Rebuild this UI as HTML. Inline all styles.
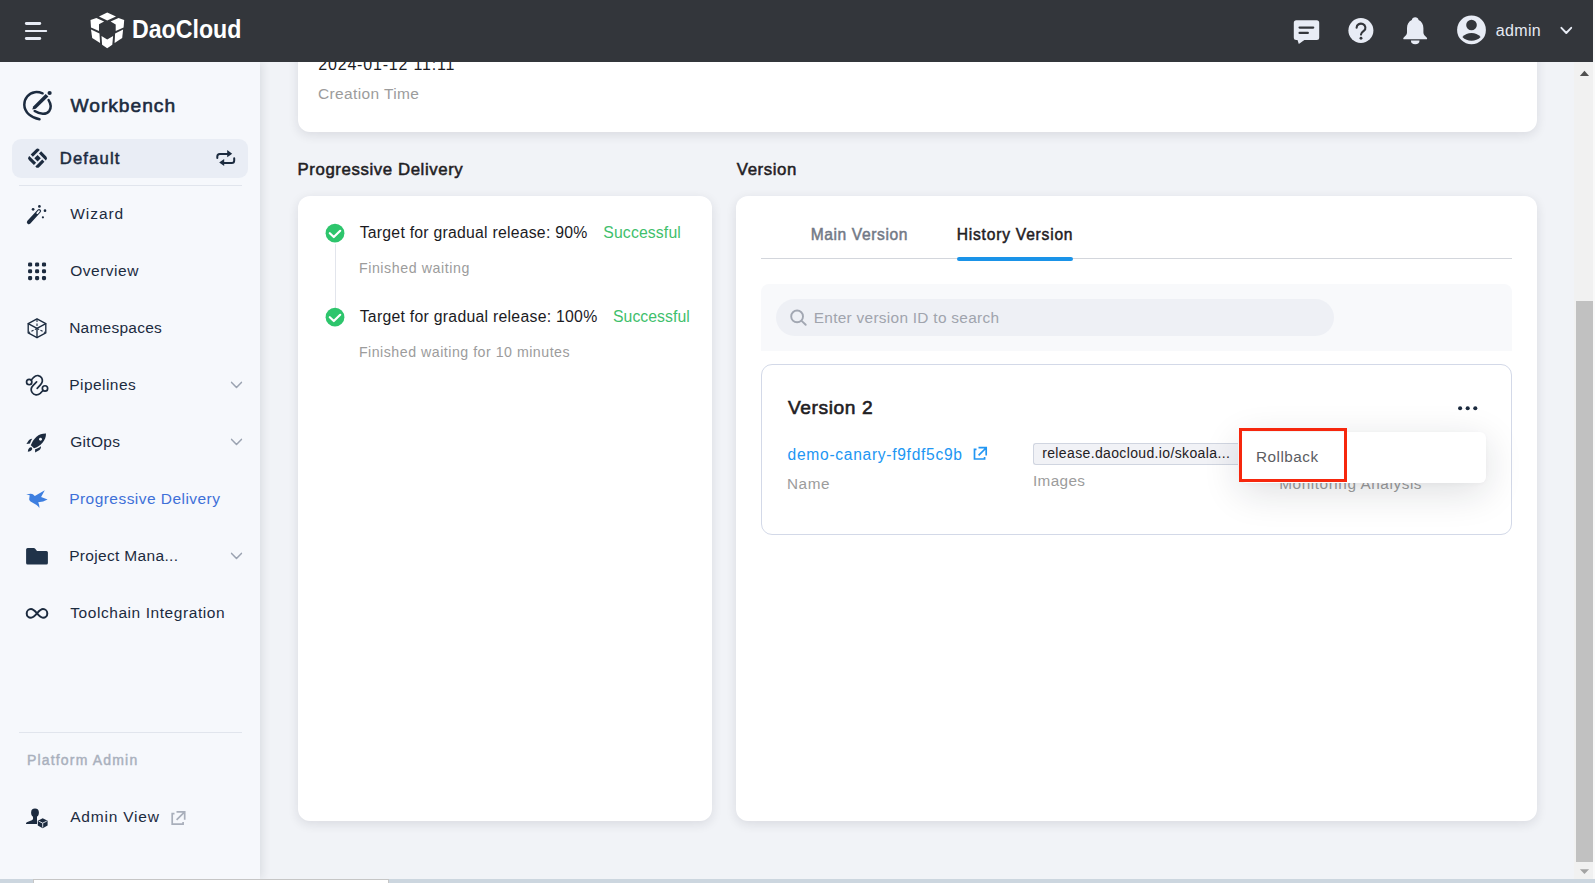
<!DOCTYPE html>
<html lang="en">
<head>
<meta charset="utf-8">
<title>Workbench - Progressive Delivery</title>
<style>
*{box-sizing:border-box;margin:0;padding:0}
html,body{width:1595px;height:883px;overflow:hidden;background:#f1f3f7;font-family:"Liberation Sans",sans-serif;color:#1b2130}
.t{position:absolute;white-space:nowrap;line-height:1}
.layer{position:absolute;left:0;top:0;width:1595px;height:883px;overflow:hidden}
svg.ov{position:absolute;left:0;top:0;width:1595px;height:883px;overflow:visible}
#main{z-index:1}
#sidebar{z-index:10;width:260px;top:62px;height:817px;background:#f6f8fc;overflow:visible;box-shadow:2px 0 9px rgba(30,32,45,.11)}
#sidebar .in{position:absolute;left:0;top:-62px;width:260px;height:883px}
#header{z-index:20;width:1593px;height:62px;background:#33363b}
#scroll{position:absolute;left:1574px;top:62px;width:19px;height:817px;background:#f1f1f1;z-index:15}
#thumb{position:absolute;left:2px;top:239px;width:17px;height:561px;background:#c1c1c1}
#rightstrip{position:absolute;left:1593px;top:0;width:2px;height:883px;background:#f9f9f9;z-index:30}
#bottom{position:absolute;left:0;top:879px;width:1595px;height:4px;background:#ccd6df;z-index:40}
#bottom i{position:absolute;left:33px;top:0;width:356px;height:4px;background:#fff;border:1px solid #c6c6c6;border-bottom:0}
.card{position:absolute;background:#fff;border-radius:12px;box-shadow:0 3px 11px rgba(25,30,50,.11)}
.box{position:absolute}
</style>
</head>
<body>
<!-- ================= MAIN ================= -->
<div id="main" class="layer">
  <div class="card" style="left:298px;top:20px;width:1239px;height:111.5px"></div>
  <div class="card" style="left:298px;top:196px;width:414px;height:625px"></div>
  <div class="card" style="left:736px;top:196px;width:801px;height:625px"></div>
  <!-- tabs -->
  <div class="box" style="left:761px;top:258px;width:751px;height:1px;background:#d3d6dc"></div>
  <div class="box" style="left:957px;top:256.5px;width:115.5px;height:4px;border-radius:2px;background:#1a93e8"></div>
  <!-- search area -->
  <div class="box" style="left:761px;top:284px;width:751px;height:67px;background:#f8f9fb;border-radius:8px 8px 0 0"></div>
  <div class="box" style="left:776px;top:299px;width:558px;height:37px;background:#eef0f5;border-radius:18.5px"></div>
  <!-- version card -->
  <div class="box" style="left:761px;top:364px;width:750.5px;height:171px;border:1px solid #d3d9e8;border-radius:11px;background:#fff"></div>
  <div class="box" style="left:1033px;top:443px;width:204.5px;height:22px;background:#f1f2f6;border:1px solid #d0d5e0;border-right:0;border-radius:3px 0 0 3px"></div>
  <!-- timeline line -->
  <div class="box" style="left:335px;top:244px;width:1px;height:64px;background:#e2e5ec"></div>
<div class="t" style="left:318.30px;top:57.0px;font-size:16px;color:#1b1b1f;letter-spacing:0.803px">2024-01-12 11:11</div>
<div class="t" style="left:318.00px;top:86.0px;font-size:15.5px;color:#9c9c9c;letter-spacing:0.363px">Creation Time</div>
<div class="t" style="left:297.56px;top:162.0px;font-size:16.8px;color:#1f2023;letter-spacing:0.594px;-webkit-text-stroke:0.52px #1f2023">Progressive Delivery</div>
<div class="t" style="left:736.86px;top:162.0px;font-size:16.8px;color:#1f2023;letter-spacing:0.573px;-webkit-text-stroke:0.52px #1f2023">Version</div>
<div class="t" style="left:359.70px;top:225.0px;font-size:15.8px;color:#1b1b1f;letter-spacing:0.238px">Target for gradual release: 90%</div>
<div class="t" style="left:603.30px;top:225.0px;font-size:15.8px;color:#3fc06c;letter-spacing:0.125px">Successful</div>
<div class="t" style="left:358.90px;top:261.0px;font-size:14.2px;color:#9c9c9c;letter-spacing:0.591px">Finished waiting</div>
<div class="t" style="left:359.70px;top:309.0px;font-size:15.8px;color:#1b1b1f;letter-spacing:0.269px">Target for gradual release: 100%</div>
<div class="t" style="left:613.00px;top:309.0px;font-size:15.8px;color:#3fc06c;letter-spacing:0.036px">Successful</div>
<div class="t" style="left:358.90px;top:345.0px;font-size:14.2px;color:#9c9c9c;letter-spacing:0.504px">Finished waiting for 10 minutes</div>
<div class="t" style="left:810.64px;top:227.0px;font-size:15.6px;color:#727986;letter-spacing:0.613px;-webkit-text-stroke:0.48px #727986">Main Version</div>
<div class="t" style="left:956.74px;top:227.0px;font-size:15.6px;color:#1f2023;letter-spacing:0.781px;-webkit-text-stroke:0.48px #1f2023">History Version</div>
<div class="t" style="left:813.80px;top:310.0px;font-size:15.4px;color:#a0a4ad;letter-spacing:0.289px">Enter version ID to search</div>
<div class="t" style="left:787.90px;top:398.0px;font-size:19.2px;color:#1f2023;letter-spacing:0.609px;-webkit-text-stroke:0.60px #1f2023">Version 2</div>
<div class="t" style="left:787.60px;top:447.0px;font-size:15.6px;color:#2196f3;letter-spacing:0.701px">demo-canary-f9fdf5c9b</div>
<div class="t" style="left:787.00px;top:476.0px;font-size:15.3px;color:#9c9c9c;letter-spacing:0.568px">Name</div>
<div class="t" style="left:1042.20px;top:446.0px;font-size:14px;color:#1f2023;letter-spacing:0.362px">release.daocloud.io/skoala...</div>
<div class="t" style="left:1033.00px;top:473.0px;font-size:15.3px;color:#9c9c9c;letter-spacing:0.357px">Images</div>
<div class="t" style="left:1279.30px;top:476.0px;font-size:15.3px;color:#9c9c9c;letter-spacing:0.579px">Monitoring Analysis</div>
  <svg class="ov" viewBox="0 0 1595 883">
<!-- check icons -->
<circle cx="335" cy="233.200" r="9.400" fill="#2dc56c"/>
<path d="M329.800 233.200 L333.800 237 L340.200 230.800" fill="none" stroke="#fff" stroke-width="2.200" stroke-linecap="round" stroke-linejoin="round"/>
<circle cx="335" cy="317.200" r="9.400" fill="#2dc56c"/>
<path d="M329.800 317.200 L333.800 321 L340.200 314.800" fill="none" stroke="#fff" stroke-width="2.200" stroke-linecap="round" stroke-linejoin="round"/>
<!-- search -->
<g fill="none" stroke="#a2a7b2" stroke-width="1.900" stroke-linecap="round">
<circle cx="797.100" cy="316.400" r="5.900"/>
<line x1="801.600" y1="320.900" x2="805.700" y2="324.800"/>
</g>
<!-- link external -->
<g fill="none" stroke="#2196f3" stroke-width="1.700">
<path d="M976.500 449.300 H974.500 V459 H984.600 V457"/>
<path d="M978.500 447.700 H986.200 V455.400 M978.600 455.300 L986 448"/>
</g>
<!-- more dots -->
<g fill="#1c2b3f"><circle cx="1460.100" cy="408.200" r="2.050"/><circle cx="1467.700" cy="408.200" r="2.050"/><circle cx="1475.300" cy="408.200" r="2.050"/></g>

  </svg>
  <!-- dropdown -->
  <div class="box" style="left:1240px;top:432px;width:246px;height:50.5px;background:#fff;border-radius:6px;box-shadow:0 9px 38px rgba(20,25,40,.14),0 1px 4px rgba(20,25,40,.03)"></div>
<div class="t" style="left:1256.10px;top:449.0px;font-size:15.3px;color:#5b5d62;letter-spacing:0.469px">Rollback</div>
  <div class="box" style="left:1239px;top:428px;width:108px;height:54px;border:3px solid #f6270d"></div>
</div>
<!-- ================= SIDEBAR ================= -->
<div id="sidebar" class="layer"><div class="in">
  <div class="box" style="left:12px;top:139px;width:236px;height:39px;background:#e9edf5;border-radius:9px"></div>
  <div class="box" style="left:19px;top:185px;width:223px;height:1px;background:#e1e5ed"></div>
  <div class="box" style="left:19px;top:732px;width:223px;height:1px;background:#e1e5ed"></div>
<div class="t" style="left:70.50px;top:96.0px;font-size:19.2px;color:#1c2b3f;letter-spacing:0.985px;-webkit-text-stroke:0.60px #1c2b3f">Workbench</div>
<div class="t" style="left:59.76px;top:151.0px;font-size:16.7px;color:#1c2b3f;letter-spacing:1.124px;-webkit-text-stroke:0.52px #1c2b3f">Default</div>
<div class="t" style="left:70.20px;top:206.0px;font-size:15.5px;color:#1c2b3f;letter-spacing:0.959px">Wizard</div>
<div class="t" style="left:70.20px;top:263.0px;font-size:15.5px;color:#1c2b3f;letter-spacing:0.514px">Overview</div>
<div class="t" style="left:69.20px;top:320.0px;font-size:15.5px;color:#1c2b3f;letter-spacing:0.233px">Namespaces</div>
<div class="t" style="left:69.20px;top:377.0px;font-size:15.5px;color:#1c2b3f;letter-spacing:0.456px">Pipelines</div>
<div class="t" style="left:70.20px;top:434.0px;font-size:15.5px;color:#1c2b3f;letter-spacing:0.303px">GitOps</div>
<div class="t" style="left:69.20px;top:491.0px;font-size:15.5px;color:#3e70d8;letter-spacing:0.454px">Progressive Delivery</div>
<div class="t" style="left:69.20px;top:548.0px;font-size:15.5px;color:#1c2b3f;letter-spacing:0.326px">Project Mana...</div>
<div class="t" style="left:70.20px;top:605.0px;font-size:15.5px;color:#1c2b3f;letter-spacing:0.569px">Toolchain Integration</div>
<div class="t" style="left:26.92px;top:753.0px;font-size:14px;color:#a9b0bd;letter-spacing:1.181px;-webkit-text-stroke:0.43px #a9b0bd">Platform Admin</div>
<div class="t" style="left:70.20px;top:809.0px;font-size:15.5px;color:#1c2b3f;letter-spacing:0.793px">Admin View</div>
  <svg class="ov" viewBox="0 0 1595 883">
<!-- workbench -->
<g fill="none" stroke="#1c2b3f" stroke-width="2.5" stroke-linecap="round">
<path d="M42.600 93.300 C40 92.300 37.400 91.900 34.800 92.200 C28.600 93 24.200 98.500 24.300 104.800 C24.400 112.500 31.300 117.900 39.500 119.200"/>
<path d="M48.600 100.100 C50.800 103.600 51.300 107.800 49.300 110.900 C46.300 115 39.900 114.400 34.700 111"/>
</g>
<polygon points="32.300,109.500 33.200,106.400 45.700,94.100 48.400,96.400 35.800,108.800" fill="#1c2b3f"/>
<circle cx="49.600" cy="93" r="2.100" fill="#1c2b3f"/>
<!-- default icon -->
<g transform="translate(37.550 158.200) rotate(-45)" fill="#1c2b3f">
<rect x="-2.300" y="-2.300" width="4.600" height="4.600"/>
<path d="M-2.300 -7.400 H4.900 A2.500 2.500 0 0 1 7.400 -4.900 V-4.300 H-2.300Z"/>
<path d="M7.400 -2.300 V4.900 A2.500 2.500 0 0 1 4.900 7.400 H4.300 V-2.300Z"/>
<path d="M2.300 7.400 H-4.900 A2.500 2.500 0 0 1 -7.400 4.900 V4.300 H2.300Z"/>
<path d="M-7.400 2.300 V-4.900 A2.500 2.500 0 0 1 -4.900 -7.400 H-4.300 V2.300Z"/>
</g>
<!-- swap -->
<g fill="none" stroke="#1c2b3f" stroke-width="2" stroke-linecap="round">
<path d="M217.300 158 V156.400 A2.500 2.500 0 0 1 219.800 153.900 H227.500"/>
<path d="M234.200 158.200 V160.400 A2.500 2.500 0 0 1 231.700 162.900 H224.200"/>
</g>
<polygon points="227.200,150 232.200,153.700 227.200,157.200" fill="#1c2b3f"/>
<polygon points="224.200,159.100 219.200,162.500 224.200,166" fill="#1c2b3f"/>
<!-- wizard -->
<line x1="28.900" y1="222.200" x2="39.100" y2="211" stroke="#1c2b3f" stroke-width="4" stroke-linecap="round"/>
<line x1="37.300" y1="213.100" x2="39" y2="211.200" stroke="#f6f8fc" stroke-width="1.800" stroke-linecap="round"/>
<g fill="#1c2b3f">
<circle cx="39.400" cy="206.400" r="1.350"/><circle cx="33.100" cy="209.300" r="1.350"/><circle cx="45" cy="210.700" r="1.350"/><circle cx="42.900" cy="217.300" r="1.100"/>
</g>
<!-- overview dots -->
<g fill="#1c2b3f">
<rect x="28.050" y="262.450" width="4.100" height="4.100" rx="1.400"/><rect x="35.050" y="262.450" width="4.100" height="4.100" rx="1.400"/><rect x="41.950" y="262.450" width="4.100" height="4.100" rx="1.400"/>
<rect x="28.050" y="269.250" width="4.100" height="4.100" rx="1.400"/><rect x="35.050" y="269.250" width="4.100" height="4.100" rx="1.400"/><rect x="41.950" y="269.250" width="4.100" height="4.100" rx="1.400"/>
<rect x="28.050" y="276.050" width="4.100" height="4.100" rx="1.400"/><rect x="35.050" y="276.050" width="4.100" height="4.100" rx="1.400"/><rect x="41.950" y="276.050" width="4.100" height="4.100" rx="1.400"/>
</g>
<!-- namespaces cube -->
<g fill="none" stroke="#1c2b3f" stroke-width="1.350" stroke-linejoin="round" stroke-linecap="round">
<polygon points="37,318.800 45.800,323.700 45.800,332.900 37,337.600 28.200,332.900 28.200,323.700"/>
<path d="M28.200 323.700 L37 328.400 L45.800 323.700 M37 328.400 V337.600"/>
</g>
<g fill="none" stroke="#1c2b3f" stroke-width="1.100" stroke-dasharray="2.400 1.500">
<path d="M37 319.600 V328.400 M37 328.400 L29 332.500 M37 328.400 L45 332.500"/>
</g>
<!-- pipelines -->
<g fill="none" stroke="#1c2b3f" stroke-width="1.700" stroke-linecap="round">
<circle cx="29.200" cy="382.100" r="2.650"/>
<circle cx="45" cy="388.400" r="2.650"/>
<path d="M31.300 380 L33.700 377.300 C36.300 374.600 40.300 375 41.800 378.200 C42.900 380.500 42.300 382.900 40.400 384.900 L37.200 388.400"/>
<path d="M36.600 381.900 L33.200 385.300 C31 387.500 30.700 390.300 32.200 392.600 C33.900 395.300 37.700 395.600 40.200 393.300 L43 390.500"/>
</g>
<!-- gitops rocket -->
<g fill="#1c2b3f">
<path d="M46 433.500 C42.500 433.400 39 434.600 36.500 436.700 C33.800 439 31.800 442.500 30.800 445.300 L34 448.200 C36.800 447.400 40.100 445.500 42.500 442.700 C44.900 439.900 46.100 436.800 46 433.500Z"/>
<path d="M32.200 438.800 C30.800 438.700 29.400 439.500 28.500 440.800 L26.400 444.100 L30 443.500 C30.500 441.800 31.300 440.200 32.200 438.800Z"/>
<path d="M41 446.300 C41.100 447.700 40.600 449.100 39.500 450 L35.100 452.600 L35.100 449.200 C37.200 448.700 39.300 447.700 41 446.300Z"/>
<path d="M32.100 448 C32.700 449.700 31.200 451.400 27.800 451.700 C28 448.400 29.800 446.800 31.300 447.200Z"/>
</g>
<circle cx="40.500" cy="439.200" r="1.450" fill="#f6f8fc"/>
<!-- progressive delivery bird -->
<path d="M26.200 494.500 L30.500 493.700 C31.500 493.600 32.300 493.900 32.900 494.300 L34.800 495.900 L44.800 490.200 L41.100 496.900 L47.600 499.400 L43.100 501.400 L38.200 502.200 C39 504 39.500 506 39.400 508.100 C38.600 506.700 37.600 505.600 36.200 504.700 L30.500 501.400 C29.500 500.700 29.200 499.900 29.200 499 L29.700 495.300Z" fill="#3e7fe0"/>
<!-- folder -->
<path d="M27.600 548 H33.900 A1.500 1.500 0 0 1 35 548.500 L37 551.100 H46.400 A1.500 1.500 0 0 1 47.900 552.600 V563 A1.500 1.500 0 0 1 46.400 564.500 H27.600 A1.500 1.500 0 0 1 26.100 563 V549.500 A1.500 1.500 0 0 1 27.600 548Z" fill="#203349"/>
<!-- infinity -->
<path d="M37 613.400 C34.500 610.500 32.800 609.100 31 609.100 A4.300 4.300 0 1 0 31 617.700 C32.800 617.700 34.500 616.300 37 613.400 C39.500 610.500 41.200 609.100 43 609.100 A4.300 4.300 0 1 1 43 617.700 C41.200 617.700 39.500 616.300 37 613.400Z" fill="none" stroke="#1c2b3f" stroke-width="2"/>
<!-- chevrons -->
<g fill="none" stroke="#9ba3b1" stroke-width="1.500" stroke-linecap="round" stroke-linejoin="round">
<path d="M231.600 382.400 L236.500 387.500 L241.400 382.400"/>
<path d="M231.600 439.400 L236.500 444.500 L241.400 439.400"/>
<path d="M231.600 553.400 L236.500 558.500 L241.400 553.400"/>
</g>
<!-- admin view -->
<g fill="#1c2b3f">
<ellipse cx="35" cy="812.800" rx="3.900" ry="4.200"/>
<path d="M32.900 815 H37 V824.100 H26 C26 823.100 26.500 822.500 27.400 822.100 L31.800 820.200 C33 819.600 33.400 818.600 32.900 817Z"/>
</g>
<polygon points="42.700,818.200 47.600,820.800 47.600,825.500 42.700,828.200 37.800,825.500 37.800,820.800" fill="#1c2b3f" stroke="#f6f8fc" stroke-width="1.200" paint-order="stroke"/>
<path d="M38.700 821.200 L42.700 823.100 L46.700 821.200 M42.700 823.100 V827.500" fill="none" stroke="#eef2f8" stroke-width=".9"/>
<!-- external -->
<g fill="none" stroke="#a9afbb" stroke-width="1.700">
<path d="M174.500 813.700 H172.200 V824.100 H183.100 V822"/>
<path d="M176.500 811.800 H184.700 V819.800 M176.600 819.800 L184.400 812.100"/>
</g>

  </svg>
</div></div>
<!-- ================= HEADER ================= -->
<div id="header" class="layer">
<div class="t" style="left:132.09px;top:17.4px;font-size:25.5px;color:#ffffff;transform:scaleX(0.9081);transform-origin:0 0;font-weight:700">DaoCloud</div>
<div class="t" style="left:1495.80px;top:22.6px;font-size:16px;color:#e6eaf3;letter-spacing:0.330px">admin</div>
  <svg class="ov" viewBox="0 0 1595 883">
<!-- hamburger -->
<g fill="#e8ecf5">
<rect x="24.9" y="22" width="16.3" height="3" rx="1.4"/>
<rect x="24.9" y="30" width="22.3" height="2" rx="1"/>
<rect x="24.9" y="37" width="16.3" height="3" rx="1.4"/>
</g>
<!-- DaoCloud cube -->
<g fill="#ffffff">
<polygon points="107.2,12.6 116,16.6 107.2,20.6 99,16.6"/>
<polygon points="90.5,20 96.4,17.9 104.1,21.4 99,24.3 99,31.1 91,27.4"/>
<polygon points="118.5,17.9 124.2,20 123.6,27.4 115.7,31.1 115.7,24.5 110.6,21.4"/>
<polygon points="91,29.4 99.5,33.6 100.1,43 92.2,37.9"/>
<polygon points="123.1,29.4 122.2,37.9 114.6,43 115.1,33.6"/>
<polygon points="101.5,36 107.2,39.6 113.1,36 112.3,44.7 107.2,48.3 102.1,44.7"/>
</g>
<!-- chat -->
<g fill="#e8ecf5">
<path d="M1296.3 20.3 H1316.7 A2.5 2.5 0 0 1 1319.2 22.800 V37.6 A2.5 2.5 0 0 1 1316.7 40.1 H1304.4 L1298.800 43.900 L1297.500 40.1 H1296.300 A2.5 2.5 0 0 1 1293.800 37.600 V22.800 A2.500 2.500 0 0 1 1296.300 20.300Z"/>
</g>
<g stroke="#33363b" stroke-width="2.3" stroke-linecap="round">
<line x1="1299.6" y1="27.6" x2="1313.2" y2="27.6"/>
<line x1="1299.6" y1="32.9" x2="1307.8" y2="32.9"/>
</g>
<!-- help -->
<circle cx="1360.9" cy="30.5" r="12.5" fill="#e8ecf5"/>
<path d="M1356.600 27.700 A4.400 4.100 0 1 1 1363.900 30.800 C1362.300 32 1361 32.900 1361 34.600" fill="none" stroke="#33363b" stroke-width="2.1" stroke-linecap="round"/>
<circle cx="1361" cy="38.3" r="1.45" fill="#33363b"/>
<!-- bell -->
<g fill="#e8ecf5">
<path d="M1415.200 17.300 C1417 17.300 1418.300 18.400 1418.600 19.900 C1421.700 21.300 1423.400 24.400 1423.400 28.200 V32.600 C1423.400 34.600 1425 36 1426.600 37.400 C1427.500 38.200 1427.200 39.200 1426.200 39.200 H1404.200 C1403.200 39.200 1402.900 38.200 1403.800 37.400 C1405.400 36 1407 34.600 1407 32.600 V28.200 C1407 24.400 1408.700 21.300 1411.800 19.900 C1412.100 18.400 1413.400 17.300 1415.200 17.300Z"/>
<path d="M1410.900 40.500 H1419.500 A4.300 3.800 0 0 1 1410.900 40.500Z"/>
</g>
<!-- avatar -->
<circle cx="1471.500" cy="29.900" r="14.400" fill="#e8ecf5"/>
<circle cx="1471.500" cy="25" r="5.300" fill="#33363b"/>
<path d="M1462.400 37 C1467 31.500 1476 31.500 1480.600 37 C1476 42 1467 42 1462.400 37Z" fill="#33363b"/>
<!-- chevron -->
<path d="M1561.400 27.800 L1566.300 33 L1571.200 27.800" fill="none" stroke="#e8ecf5" stroke-width="1.9" stroke-linecap="round" stroke-linejoin="round"/>

  </svg>
</div>
<div id="scroll"><div id="thumb"></div>
  <svg style="position:absolute;left:0;top:0;width:18px;height:817px" viewBox="0 0 18 817"><path d="M5.9 13.9 L10.5 8.8 L15.100 13.900Z" fill="#505050"/><path d="M5.900 807.300 L10.500 812.100 L15.100 807.300Z" fill="#a3a3a3"/></svg>
</div>
<div id="rightstrip"></div>
<div id="bottom"><i></i></div>
</body>
</html>
